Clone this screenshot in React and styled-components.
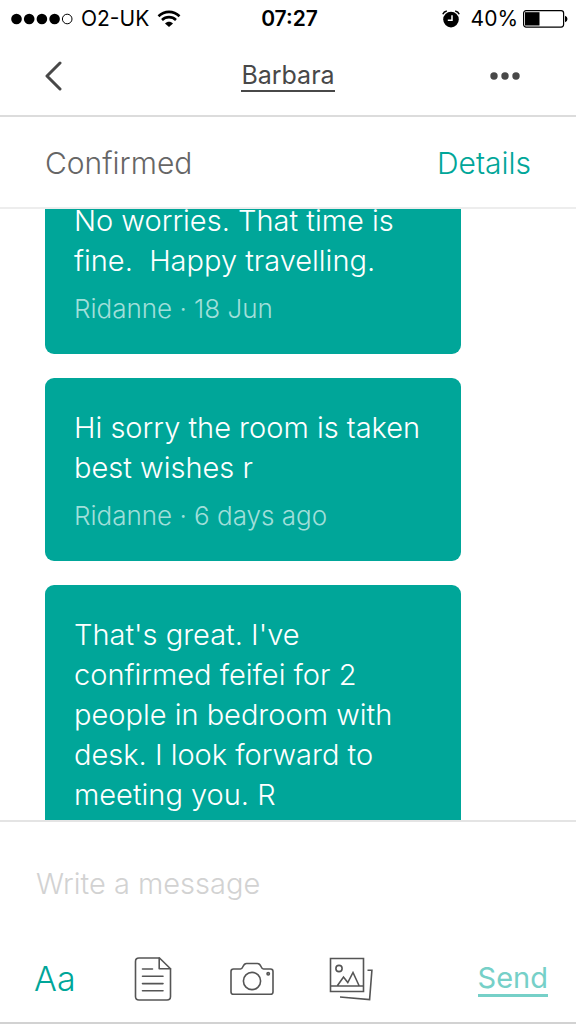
import React, { useLayoutEffect, useRef } from "react";
import styled, { createGlobalStyle } from "styled-components";

const GlobalStyle = createGlobalStyle`
  * { box-sizing: border-box; }
  body {
    margin: 0;
    background: #fff;
    color: #484848;
    font-family: Inter, "Liberation Sans", sans-serif;
    font-weight: 300;
  }
  button, input { font: inherit; }
`;

const Screen = styled.div`
  display: flex;
  flex-direction: column;
  height: 100vh;
  border-bottom: 2px solid #d2d2d2;
`;

const StatusBar = styled.div`
  display: grid;
  grid-template-columns: 1fr auto 1fr;
  align-items: center;
  height: 37px;
  padding: 0 8px 0 11px;
  color: #000;
  font-size: 21px;
  font-weight: 400;
`;

const StatusGroup = styled.div`
  display: flex;
  align-items: center;
  justify-content: ${(p) => (p.$end ? "flex-end" : "flex-start")};
  gap: ${(p) => (p.$end ? "5px" : "8px")};
`;

const Clock = styled.time`
  font-weight: 600;
`;

const AlarmSlot = styled.span`
  display: flex;
  margin-right: 6px;
`;

const NavBar = styled.header`
  display: grid;
  grid-template-columns: 1fr auto 1fr;
  align-items: center;
  height: 80px;
  padding: 0 45px;
  border-bottom: 2px solid #dcdcdc;
`;

const IconButton = styled.button`
  display: flex;
  justify-self: ${(p) => (p.$end ? "end" : "start")};
  padding: 0;
  border: 0;
  background: none;
  color: #484848;
  cursor: pointer;
`;

const ContactLink = styled.a`
  color: #484848;
  font-size: 25px;
  font-weight: 400;
  line-height: 30px;
  text-decoration: none;
  border-bottom: 2px solid #484848;
`;

const BookingBar = styled.div`
  display: flex;
  align-items: center;
  justify-content: space-between;
  height: 92px;
  padding: 2px 45px 0;
  border-bottom: 2px solid #ededed;
  font-size: 30px;
`;

const Status = styled.span`
  color: #666;
`;

const DetailsLink = styled.a`
  color: #00a699;
  text-decoration: none;
`;

const Messages = styled.main`
  display: flex;
  flex: 1;
  flex-direction: column;
  gap: 24px;
  min-height: 0;
  padding: 24px 20% 24px 45px;
  overflow-y: auto;
  scrollbar-width: none;
`;

const Bubble = styled.article`
  flex: none;
  padding: 30px 20px 25px 29px;
  border-radius: 9px;
  background: #00a699;
  color: #fff;
`;

const Line = styled.p`
  margin: 0;
  font-size: 29px;
  line-height: 40px;
  white-space: pre-wrap;
`;

const Meta = styled.p`
  margin: 8px 0 0;
  color: #a0dfda;
  font-size: 26px;
  line-height: 40px;
`;

const Composer = styled.form`
  flex: none;
  border-top: 2px solid #e4e4e4;
`;

const MessageInput = styled.input`
  display: block;
  width: 100%;
  height: 122px;
  padding: 0 36px;
  border: 0;
  outline: 0;
  background: none;
  color: #484848;
  font-size: 29px;

  &::placeholder {
    color: #d2d2d2;
    opacity: 1;
  }
`;

const Toolbar = styled.div`
  display: flex;
  align-items: center;
  justify-content: space-between;
  height: 78px;
  padding: 0 28px 8px 34px;
`;

const Tools = styled.div`
  display: flex;
  align-items: center;
  gap: 55px;
`;

const ToolButton = styled(IconButton)`
  justify-content: center;
  width: 44px;
`;

const TextButton = styled(IconButton)`
  width: 42px;
  color: #00a699;
  font-size: 34px;
  line-height: 40px;
`;

const SendButton = styled(IconButton)`
  border-bottom: 3px solid #76d0c8;
  color: #76d0c8;
  font-size: 29px;
  font-weight: 400;
  line-height: 32px;
`;

const SignalIcon = () => (
  <svg width="62" height="12" viewBox="0 0 62 12" aria-hidden="true">
    {[5.5, 18.2, 30.9, 43.6].map((x) => (
      <circle key={x} cx={x} cy="6" r="5.3" />
    ))}
    <circle cx="56.2" cy="6" r="4.8" fill="none" stroke="#000" />
  </svg>
);

const WifiIcon = () => (
  <svg width="24" height="18" viewBox="0 0 24 18" fill="none" stroke="#000" strokeWidth="2.6" aria-hidden="true">
    <path d="M1.5 6.2C7.5.4 16.5.4 22.5 6.2" />
    <path d="M5 10C9 6.2 15 6.2 19 10" />
    <path d="M8 13.4C10.3 11.3 13.7 11.3 16 13.4L12 17Z" fill="#000" stroke="none" />
  </svg>
);

const AlarmIcon = () => (
  <svg width="18" height="18" viewBox="0 0 18 18" aria-hidden="true">
    <circle cx="9" cy="9.6" r="7.8" />
    <path d="M.8 4.2Q1.8 1.5 4.8.9M17.2 4.2Q16.2 1.5 13.2.9" fill="none" stroke="#000" strokeWidth="1.5" />
    <path d="M10 5.2V10.2H5.8" fill="none" stroke="#fff" strokeWidth="1.5" />
  </svg>
);

const BatteryIcon = () => (
  <svg width="45" height="18" viewBox="0 0 45 18" aria-hidden="true">
    <rect x=".6" y=".6" width="40" height="16.5" rx="2.5" fill="none" stroke="#000" strokeWidth="1.2" />
    <rect x="2" y="2.2" width="14.5" height="13.3" />
    <path d="M42 5.8Q44.5 6.5 44.5 9T42 12.2Z" />
  </svg>
);

const BackIcon = () => (
  <svg width="18" height="30" viewBox="0 0 18 30" fill="none" stroke="currentColor" strokeWidth="3" strokeLinecap="round" strokeLinejoin="round" aria-hidden="true">
    <path d="M15 2L2 15L15 28" />
  </svg>
);

const MoreIcon = () => (
  <svg width="41" height="8" viewBox="0 0 41 8" fill="currentColor" aria-hidden="true">
    <circle cx="4" cy="4" r="3.7" />
    <circle cx="15" cy="4" r="3.7" />
    <circle cx="26" cy="4" r="3.7" />
  </svg>
);

const toolIcon = {
  fill: "none",
  stroke: "#555",
  strokeWidth: 1.6,
  strokeLinecap: "round",
  strokeLinejoin: "round",
  "aria-hidden": true,
};

const NoteIcon = () => (
  <svg width="38" height="44" viewBox="0 0 38 44" {...toolIcon}>
    <path d="M5 1H25.5L36.5 11.8V39.5Q36.5 43 33 43H5Q1.5 43 1.5 39.5V4.5Q1.5 1 5 1Z" />
    <path d="M25.2 1V11.8H36.5M8.5 12H18.5M8.5 19.3H29M8.5 26.6H29M8.5 33.8H29" />
  </svg>
);

const CameraIcon = () => (
  <svg width="44" height="34" viewBox="0 0 44 34" {...toolIcon}>
    <path d="M3.5 7H10.5Q12 7 13 4.5Q14.3 1.5 16.5 1.5H27.500Q29.7 1.5 31 4.5Q32 7 33.5 7H40.5Q43 7 43 9.5V30Q43 32.3 40.5 32.3H3.5Q1 32.3 1 30V9.5Q1 7 3.5 7Z" />
    <circle cx="22" cy="19" r="8.6" />
    <circle cx="38.2" cy="11.8" r="1.2" />
  </svg>
);

const PhotosIcon = () => (
  <svg width="44" height="44" viewBox="0 0 44 44" {...toolIcon} strokeLinecap="butt" strokeLinejoin="miter">
    <path d="M1.5 1.5H34.5V34.5H1.5ZM1.5 29H34.5M8.5 28.5L14.5 20L18.8 25.5L24 15.5L30 28.5" />
    <circle cx="10" cy="11.5" r="3.1" />
    <path d="M38.5 13.2H42.9L40.6 42.6L11 40" />
  </svg>
);

const messages = [
  { text: "No worries. That time is fine.  Happy travelling.", meta: "Ridanne · 18 Jun" },
  { text: "Hi sorry the room is taken best wishes r", meta: "Ridanne · 6 days ago" },
  { text: "That's great. I've confirmed feifei for 2 people in bedroom with desk. I look forward to meeting you. R" },
];

const INITIAL_SCROLL = 62;

export default function App() {
  const list = useRef(null);

  useLayoutEffect(() => {
    list.current.scrollTop = INITIAL_SCROLL;
  }, []);

  return (
    <>
      <GlobalStyle />
      <Screen>
        <StatusBar>
          <StatusGroup>
            <SignalIcon />
            <span>O2-UK</span>
            <WifiIcon />
          </StatusGroup>
          <Clock>07:27</Clock>
          <StatusGroup $end>
            <AlarmSlot>
              <AlarmIcon />
            </AlarmSlot>
            <span>40%</span>
            <BatteryIcon />
          </StatusGroup>
        </StatusBar>
        <NavBar>
          <IconButton type="button" aria-label="Back">
            <BackIcon />
          </IconButton>
          <ContactLink href="#profile">Barbara</ContactLink>
          <IconButton type="button" aria-label="More options" $end>
            <MoreIcon />
          </IconButton>
        </NavBar>
        <BookingBar>
          <Status>Confirmed</Status>
          <DetailsLink href="#details">Details</DetailsLink>
        </BookingBar>
        <Messages ref={list}>
          {messages.map((m) => (
            <Bubble key={m.text}>
              <Line>{m.text}</Line>
              {m.meta && <Meta>{m.meta}</Meta>}
            </Bubble>
          ))}
        </Messages>
        <Composer onSubmit={(e) => e.preventDefault()}>
          <MessageInput type="text" aria-label="Message" placeholder="Write a message" />
          <Toolbar>
            <Tools>
              <TextButton type="button">Aa</TextButton>
              <ToolButton type="button" aria-label="Saved messages">
                <NoteIcon />
              </ToolButton>
              <ToolButton type="button" aria-label="Camera">
                <CameraIcon />
              </ToolButton>
              <ToolButton type="button" aria-label="Photos">
                <PhotosIcon />
              </ToolButton>
            </Tools>
            <SendButton type="submit">Send</SendButton>
          </Toolbar>
        </Composer>
      </Screen>
    </>
  );
}
